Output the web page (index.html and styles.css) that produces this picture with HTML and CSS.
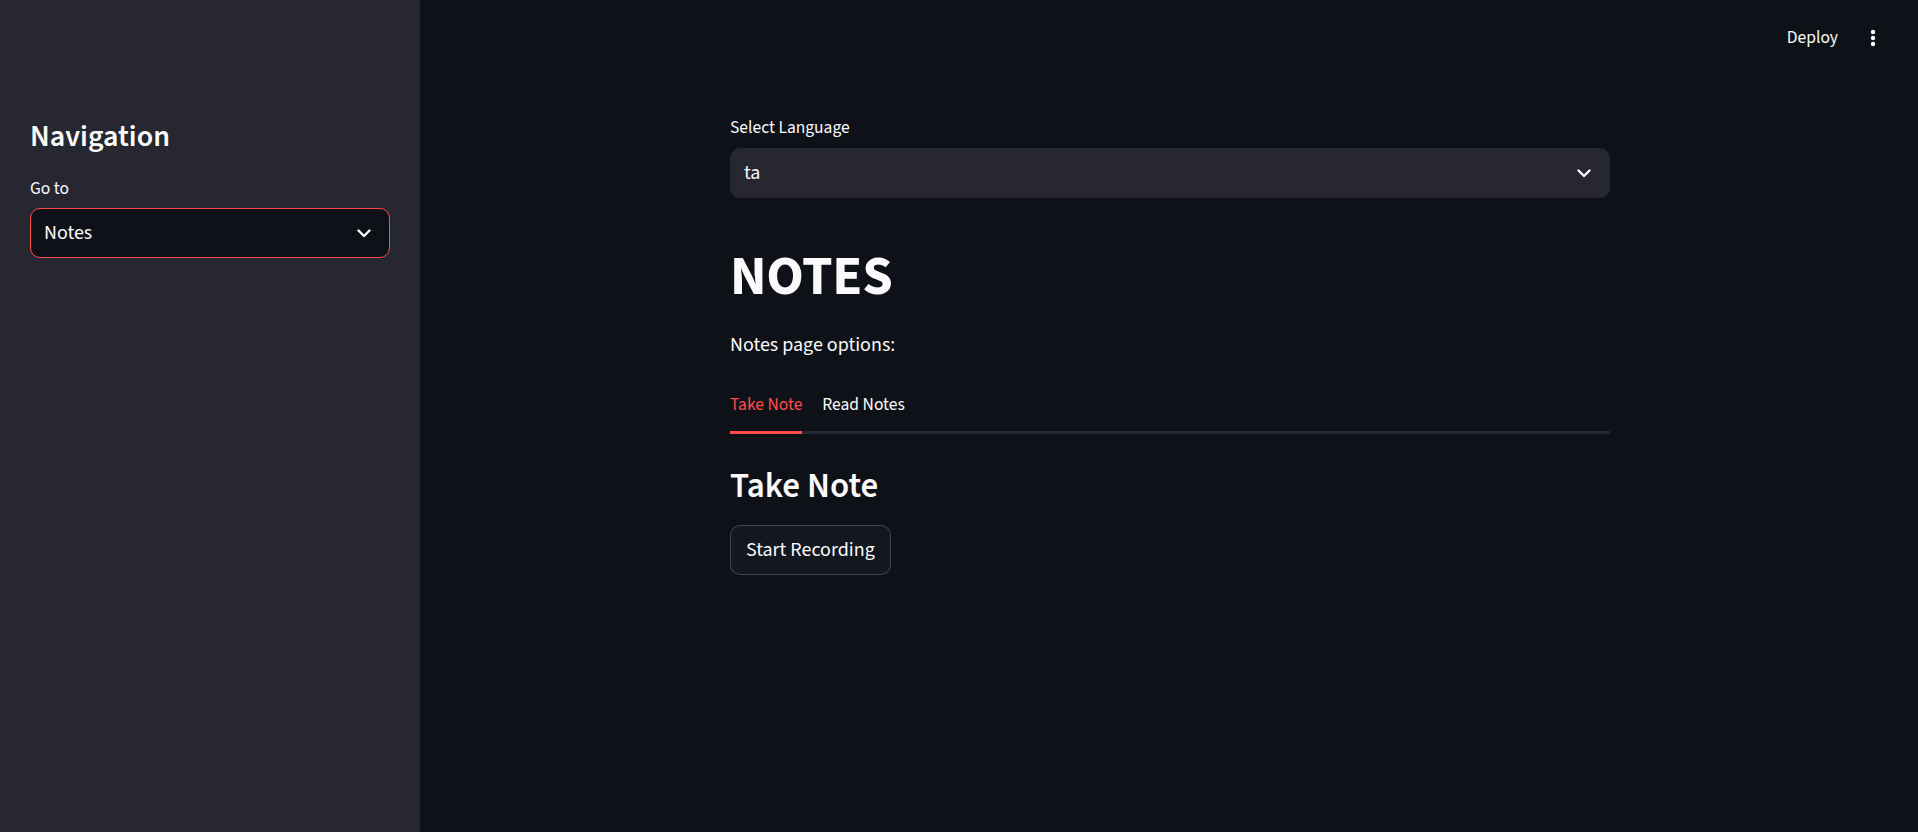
FILE: index.html
```html
<!DOCTYPE html>
<html lang="en">
<head>
<meta charset="utf-8">
<title>Notes</title>
<link rel="stylesheet" href="styles.css">
</head>
<body>
<div class="app">
  <aside class="sidebar">
    <h1 class="side-title">Navigation</h1>
    <label class="widget-label">Go to</label>
    <div class="select select-focused">
      <span class="select-value">Notes</span>
      <svg class="chev" width="14" height="9" viewBox="0 0 14 9"><path d="M1.5 1.5 L7 7 L12.5 1.5" fill="none" stroke="#fafafa" stroke-width="2.4" stroke-linecap="round" stroke-linejoin="round"/></svg>
    </div>
  </aside>
  <div class="main">
    <header class="topbar">
      <span class="deploy">Deploy</span>
      <svg class="menu" width="6" height="18" viewBox="0 0 6 18"><circle cx="3" cy="3" r="2.2" fill="#fafafa"/><circle cx="3" cy="9" r="2.2" fill="#fafafa"/><circle cx="3" cy="15" r="2.2" fill="#fafafa"/></svg>
    </header>
    <section class="block">
      <label class="widget-label lang-label">Select Language</label>
      <div class="select select-main">
        <span class="select-value">ta</span>
        <svg class="chev" width="14" height="9" viewBox="0 0 14 9"><path d="M1.5 1.5 L7 7 L12.5 1.5" fill="none" stroke="#fafafa" stroke-width="2.4" stroke-linecap="round" stroke-linejoin="round"/></svg>
      </div>
      <h1 class="page-title">NOTES</h1>
      <p class="text">Notes page options:</p>
      <div class="tabs">
        <div class="tab tab-active">Take Note</div>
        <div class="tab">Read Notes</div>
      </div>
      <h3 class="sub-title">Take Note</h3>
      <button class="btn">Start Recording</button>
    </section>
  </div>
</div>
</body>
</html>
```

FILE: styles.css
```css
* { box-sizing: border-box; }
html, body {
  margin: 0;
  padding: 0;
  height: 100%;
  background: #0e1117;
  color: #fafafa;
  font-family: "Source Sans Pro", "Source Sans 3", "Lato", "Liberation Sans", sans-serif;
}
.app {
  display: flex;
  height: 832px;
  overflow: hidden;
}
.sidebar {
  width: 420px;
  flex: none;
  background: #262730;
  padding: 116px 30px 0 30px;
  display: flex;
  flex-direction: column;
}
.side-title {
  margin: 0;
  font-size: 30px;
  font-weight: 600;
  line-height: 42px;
  height: 42px;
}
.widget-label {
  display: block;
  font-size: 17.5px;
  line-height: 22px;
  color: #fafafa;
}
.sidebar .widget-label {
  margin-top: 20px;
  margin-bottom: 8px;
}
.select {
  display: flex;
  align-items: center;
  justify-content: space-between;
  height: 50px;
  border-radius: 10px;
  padding: 0 18px 0 13px;
  font-size: 20px;
}
.select-focused {
  background: #0e1117;
  border: 1px solid #ff4b4b;
}
.select-main {
  background: #262730;
  border: 1px solid #262730;
  padding-left: 13px;
}
.chev { display: block; }
.main {
  flex: 1;
  display: flex;
  flex-direction: column;
  min-width: 0;
  padding-left: 2px;
}
.topbar {
  height: 60px;
  display: flex;
  align-items: center;
  justify-content: flex-end;
  padding: 16px 42px 0 0;
  gap: 32px;
}
.deploy {
  font-size: 17.5px;
  line-height: 22px;
}
.block {
  width: 880px;
  margin: 0 auto;
  padding-top: 57px;
  display: flex;
  flex-direction: column;
  align-items: flex-start;
}
.lang-label { margin-bottom: 9px; width: 100%; }
.select-main { width: 100%; }
.page-title {
  margin: 46px 0 0 0;
  font-size: 55px;
  font-weight: 700;
  line-height: 66px;
  letter-spacing: -0.3px;
}
.text {
  margin: 19px 0 0 0;
  font-size: 20px;
  line-height: 32px;
}
.tabs {
  width: 100%;
  margin-top: 20px;
  display: flex;
  gap: 20px;
  border-bottom: 3px solid #262730;
}
.tab {
  display: flex;
  align-items: center;
  font-size: 17.5px;
  color: #fafafa;
  margin-bottom: -3px;
  border-bottom: 3px solid transparent;
  height: 53px;
  padding-bottom: 3px;
}
.tab-active {
  color: #ff4b4b;
  border-bottom-color: #ff4b4b;
}
.sub-title {
  margin: 31px 0 0 0;
  font-size: 35px;
  font-weight: 600;
  line-height: 42px;
}
.btn {
  margin-top: 18px;
  height: 50px;
  padding: 0 15px;
  background: #131720;
  color: #fafafa;
  border: 1px solid rgba(250, 250, 250, 0.2);
  border-radius: 10px;
  font-family: inherit;
  font-size: 20px;
}
```
